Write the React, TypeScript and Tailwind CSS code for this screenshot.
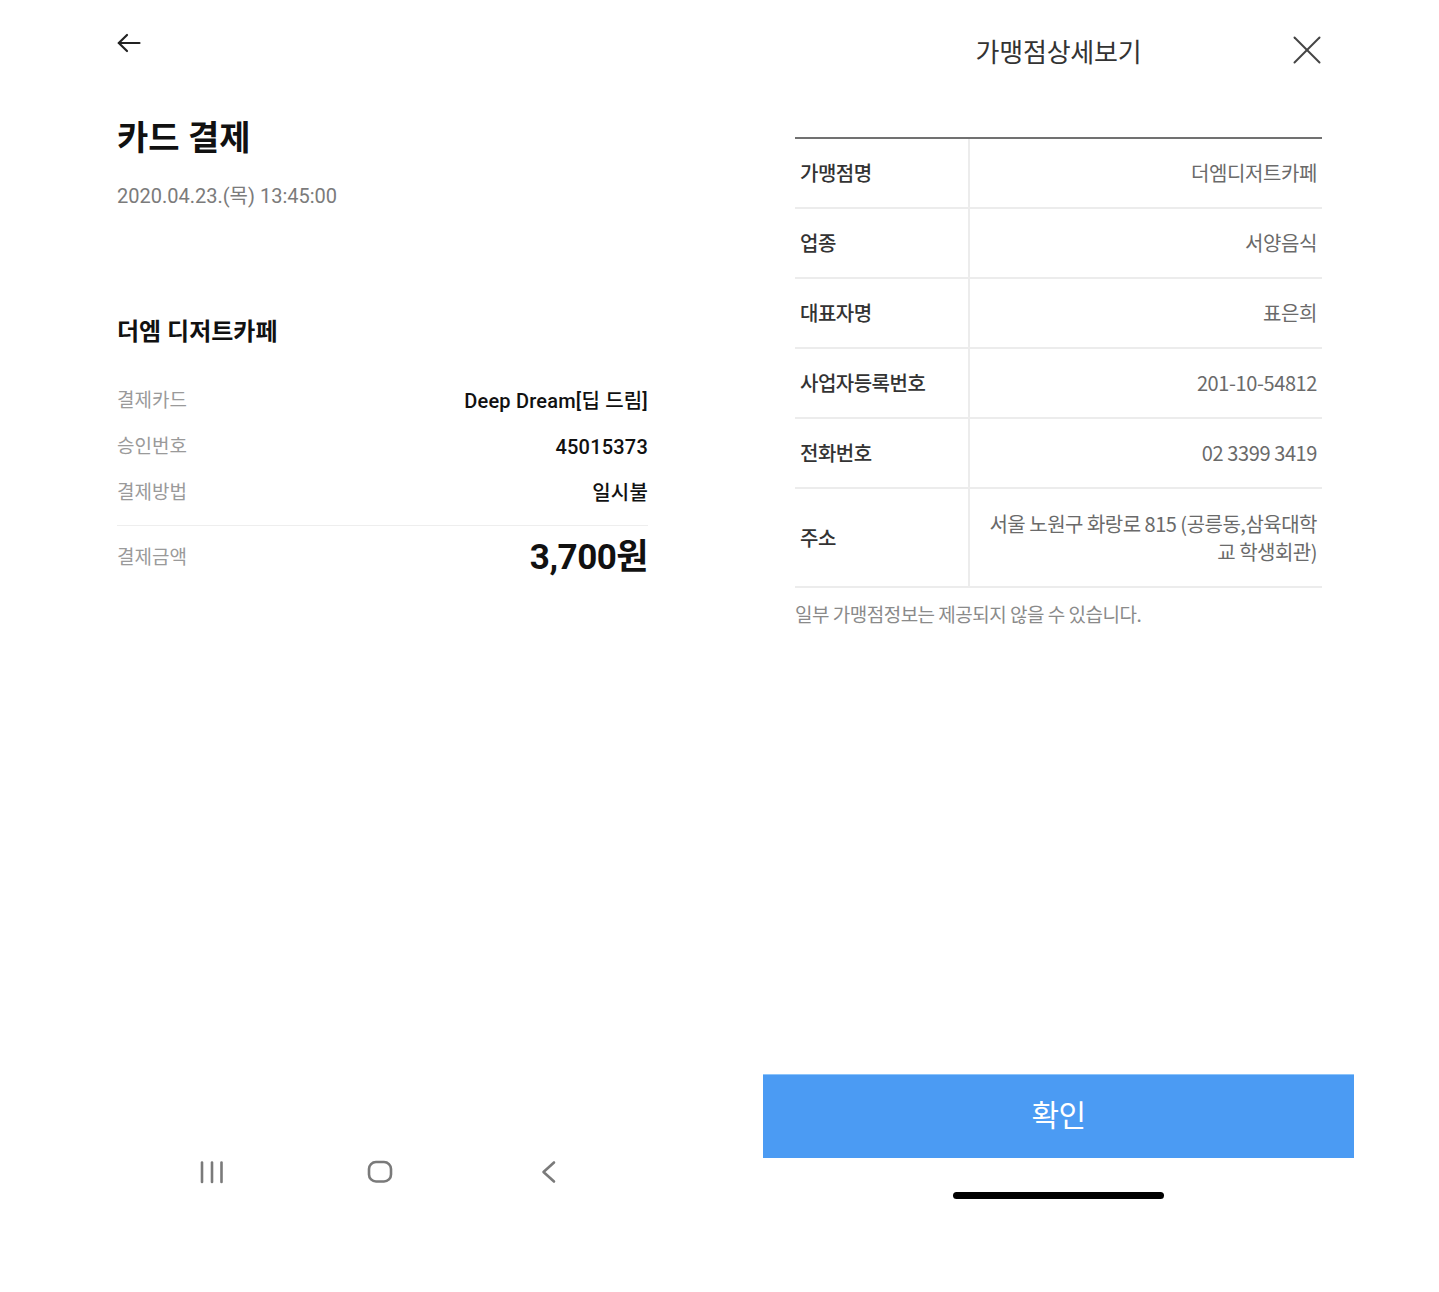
import React from "react";

const leftFont = { fontFamily: "Roboto, 'Noto Sans CJK KR', sans-serif" };
const rightFont = { fontFamily: "'Noto Sans CJK KR', 'Noto Sans', sans-serif" };

const payRows = [
  { label: "결제카드", value: "Deep Dream[딥 드림]" },
  { label: "승인번호", value: "45015373" },
  { label: "결제방법", value: "일시불" },
];

const merchantRows = [
  { label: "가맹점명", value: "더엠디저트카페" },
  { label: "업종", value: "서양음식" },
  { label: "대표자명", value: "표은희" },
  { label: "사업자등록번호", value: "201-10-54812" },
  { label: "전화번호", value: "02 3399 3419" },
];

function BackArrow() {
  return (
    <svg width="24" height="24" viewBox="0 0 24 24" fill="none" stroke="#222" strokeWidth="2.2" strokeLinecap="round" strokeLinejoin="round">
      <path d="M22.5 12H1.8" />
      <path d="M10 4L1.8 12L10 20" />
    </svg>
  );
}

function CloseIcon() {
  return (
    <svg width="28" height="28" viewBox="0 0 28 28" fill="none" stroke="#444" strokeWidth="2" strokeLinecap="round">
      <path d="M1.5 1.5L26.5 26.5" />
      <path d="M26.5 1.5L1.5 26.5" />
    </svg>
  );
}

// android nav bar on the left screenshot
function NavBar() {
  return (
    <div className="mt-auto mb-[106px] ml-[81px] flex gap-[140px]">
      <svg width="28" height="28" viewBox="0 0 28 28" fill="none" stroke="#7a7a7a" strokeWidth="2.6" strokeLinecap="round">
        <path d="M4 4.5V24" />
        <path d="M14 4.5V24" />
        <path d="M23.5 4.5V24" />
      </svg>
      <svg width="28" height="28" viewBox="0 0 28 28" fill="none" stroke="#7a7a7a" strokeWidth="2.6">
        <rect x="3" y="4" width="22" height="19.5" rx="7" />
      </svg>
      <svg width="28" height="28" viewBox="0 0 28 28" fill="none" stroke="#7a7a7a" strokeWidth="2.6" strokeLinecap="round" strokeLinejoin="round">
        <path d="M20 4.5L9.5 14L20 23.5" />
      </svg>
    </div>
  );
}

function PaymentScreen() {
  return (
    <div className="ml-[117px] w-[531px] h-full flex flex-col pt-[31px]" style={leftFont}>
      <BackArrow />
      <h1 className="mt-[63px] text-[34px] leading-[40px] font-bold text-[#111]">카드 결제</h1>
      <p className="mt-[24px] text-[20px] leading-[28px] text-[#7b7b7b]">2020.04.23.(목) 13:45:00</p>

      <h2 className="mt-[106px] text-[24px] leading-[32px] font-bold text-[#111]">더엠 디저트카페</h2>

      <div className="mt-[30px] flex flex-col">
        {payRows.map((r) => (
          <div key={r.label} className="h-[46px] flex items-center justify-between">
            <span className="text-[19px] text-[#9a9a9a]">{r.label}</span>
            <span className="text-[20px] font-medium text-[#111] tracking-[0.2px]">{r.value}</span>
          </div>
        ))}
      </div>

      <div className="mt-[9px] h-px bg-[#eeeeee]" />

      <div className="mt-[2px] h-[60px] flex items-center justify-between">
        <span className="text-[19px] text-[#9a9a9a]">결제금액</span>
        <span className="text-[35px] font-bold text-[#111] tracking-[-0.5px]">3,700원</span>
      </div>

      <NavBar />
    </div>
  );
}

function MerchantModal() {
  return (
    <div className="ml-[115px] w-[591px] h-full flex flex-col" style={rightFont}>
      <div className="h-[100px] grid grid-cols-[1fr_auto_1fr] items-center">
        <div />
        <h1 className="text-[26px] text-[#333] tracking-[-0.2px]">가맹점상세보기</h1>
        <div className="flex justify-end pr-[33px]">
          <CloseIcon />
        </div>
      </div>

      <div className="mx-[32px] mt-[37px] border-t-2 border-[#717171]">
        {merchantRows.map((r) => (
          <div key={r.label} className="flex h-[70px] border-b-2 border-[#ececec]">
            <div className="w-[175px] shrink-0 border-r-2 border-[#ececec] pl-[5px] flex items-center text-[20px] font-medium text-[#333] tracking-[-0.5px]">
              {r.label}
            </div>
            <div className="flex-1 pr-[5px] flex items-center justify-end text-[20px] text-[#6a6a6a] tracking-[-0.4px]">
              {r.value}
            </div>
          </div>
        ))}
        <div className="flex h-[99px] border-b-2 border-[#ececec]">
          <div className="w-[175px] shrink-0 border-r-2 border-[#ececec] pl-[5px] flex items-center text-[20px] font-medium text-[#333] tracking-[-0.5px]">
            주소
          </div>
          <div className="flex-1 pr-[5px] flex flex-col items-end justify-center text-[20px] leading-[28px] text-[#6a6a6a] tracking-[-0.5px] whitespace-nowrap">
            <span>서울 노원구 화랑로 815 (공릉동,삼육대학</span>
            <span>교 학생회관)</span>
          </div>
        </div>
      </div>

      <p className="mx-[32px] mt-[13px] text-[19px] leading-[26px] text-[#8a8a8a] tracking-[-0.5px]">
        일부 가맹점정보는 제공되지 않을 수 있습니다.
      </p>

      <button className="mt-auto h-[84px] w-full bg-[#4b9bf3] border-t border-[#8cc4fa] pb-[6px] text-white text-[30px] tracking-[-0.5px]">
        확인
      </button>
      <div className="mt-[34px] mb-[93px] mx-auto w-[211px] h-[7px] rounded-full bg-black" />
    </div>
  );
}

export default function App() {
  return (
    <div className="w-[1439px] h-[1292px] bg-white flex">
      <PaymentScreen />
      <MerchantModal />
    </div>
  );
}
